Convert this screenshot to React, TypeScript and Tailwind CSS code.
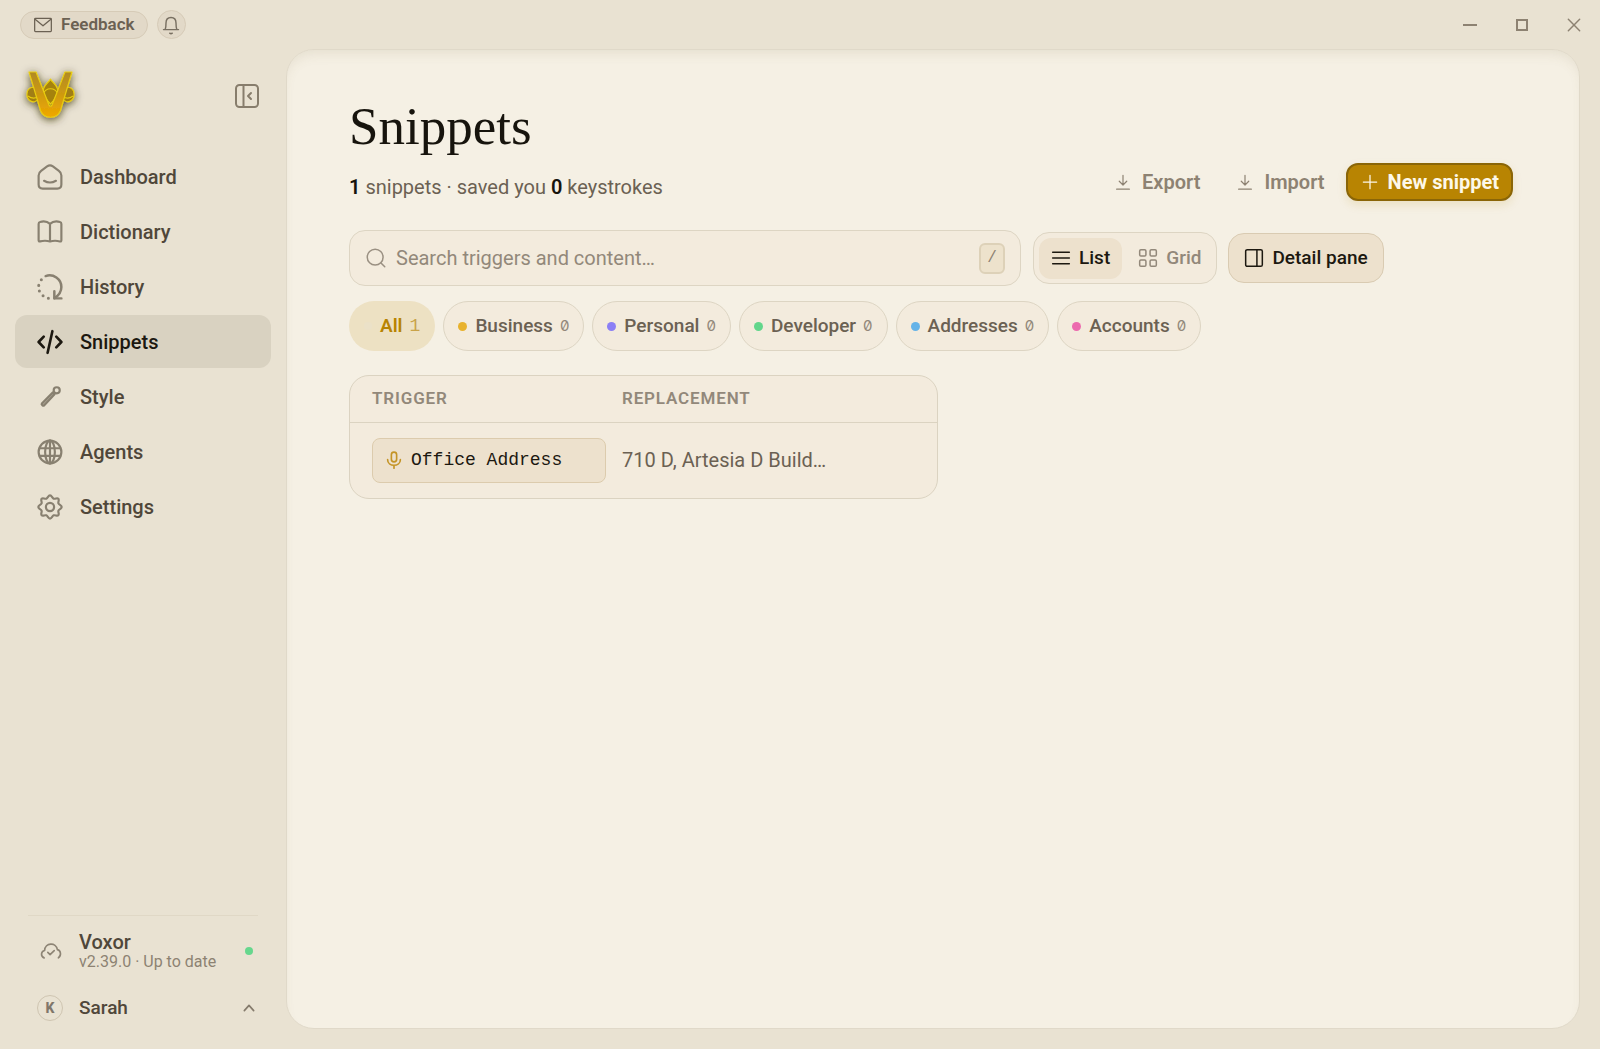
import type { ReactNode } from 'react';

type IconProps = { className?: string; children: ReactNode; width?: number };

function Icon({ className = 'size-6', children, width = 2 }: IconProps) {
  return (
    <svg
      viewBox="0 0 24 24"
      className={`shrink-0 ${className}`}
      fill="none"
      stroke="currentColor"
      strokeWidth={width}
      strokeLinecap="round"
      strokeLinejoin="round"
      aria-hidden="true"
    >
      {children}
    </svg>
  );
}

const nav = [
  {
    label: 'Dashboard',
    icon: (
      <>
        <path d="M1.500 10.500c0-2.200.6-3 2.300-4.200l5.500-4c1.800-1.300 3.600-1.300 5.400 0l5.500 4c1.700 1.200 2.300 2 2.300 4.200v8.500c0 2.500-1.200 3.700-3.700 3.700H5.200c-2.500 0-3.700-1.200-3.700-3.700z" />
        <path d="M6.500 15.500c3.500 2 7.500 2 11 0" />
      </>
    ),
  },
  {
    label: 'Dictionary',
    icon: (
      <path d="M12 4.500v16.300M12 4.500C9.500 2.300 5.500 2 2.800 2.800c-.8.200-1.300.8-1.300 1.700v15.200c0 .8.500 1.200 1.300 1 3-.8 6.700-.7 9.200.1 2.500-.8 6.200-.9 9.200-.1.800.2 1.300-.2 1.300-1V4.500c0-.9-.5-1.500-1.300-1.700C18.500 2 14.500 2.300 12 4.500z" />
    ),
  },
  {
    label: 'History',
    icon: (
      <>
        <path d="M8 1.900C15-.6 22.500 4.700 22.500 12c0 4.300-2.400 7.700-6.300 10.300" strokeWidth={2.300} />
        <path d="M16 16v6.500h6.500" strokeWidth={2.300} />
        <path d="M4 5.300v.01M1.600 10.500v.01M2.200 15.700v.01M5.600 20v.01M10.500 22.400v.01" strokeWidth={2.800} />
      </>
    ),
  },
  {
    label: 'Snippets',
    active: true,
    icon: <path d="m6.200 7-4.700 5 4.700 5M17.800 7l4.700 5-4.700 5M14.200 2 9.800 22" strokeWidth={2.400} />,
  },
  {
    label: 'Style',
    icon: (
      <>
        <path d="m14.500 7.800 1.700 1.700L6.500 19.800c-.8.800-2.800-.8-2-1.900z" fill="currentColor" fillOpacity="0.600" />
        <circle cx="18.200" cy="5.800" r="2.800" />
      </>
    ),
  },
  {
    label: 'Agents',
    icon: (
      <>
        <circle cx="12" cy="12" r="10.500" />
        <ellipse cx="12" cy="12" rx="4.500" ry="10.500" />
        <path d="M2.500 8.500h19M2.500 15.500h19M12 1.500v21" />
      </>
    ),
  },
  {
    label: 'Settings',
    icon: (
      <>
        <path d="M12 1.300c1.700 0 2 2.400 3.400 3 1.400.6 3.200-1 4.300.1s-.5 2.900.1 4.300c.6 1.400 3 1.600 3 3.300s-2.400 1.900-3 3.300c-.6 1.400 1 3.200-.1 4.300s-2.900-.5-4.300.1c-1.400.6-1.700 3-3.400 3s-2-2.400-3.400-3c-1.400-.6-3.200 1-4.300-.1s.5-2.900-.1-4.300c-.6-1.400-3-1.600-3-3.300s2.400-1.900 3-3.300c.6-1.400-1-3.200.1-4.300s2.900.5 4.300-.1c1.400-.6 1.700-3 3.400-3z" />
        <circle cx="12" cy="12" r="3.800" />
      </>
    ),
  },
];

const categories = [
  { label: 'Business', dot: 'bg-[#e8b22d]' },
  { label: 'Personal', dot: 'bg-[#8b7ff5]' },
  { label: 'Developer', dot: 'bg-[#62d68b]' },
  { label: 'Addresses', dot: 'bg-[#65b3e8]' },
  { label: 'Accounts', dot: 'bg-[#ec6aae]' },
];

function Logo() {
  return (
    <svg viewBox="0 0 64 64" className="size-16 overflow-visible" role="img" aria-label="Voxor">
      <defs>
        <linearGradient id="gold" x1="0" y1="0" x2="0" y2="1">
          <stop offset="0" stopColor="#b08a25" />
          <stop offset="0.5" stopColor="#cf9a10" />
          <stop offset="1" stopColor="#f0a800" />
        </linearGradient>
        <filter id="glow" x="-40%" y="-40%" width="180%" height="180%">
          <feDropShadow dx="0" dy="2" stdDeviation="4" floodColor="#3a3010" floodOpacity="0.85" />
        </filter>
      </defs>
      <g filter="url(#glow)" stroke="#e8cc12" strokeWidth="1.200" strokeLinejoin="round">
        <path d="M31.500 15c1 3 6 5 7 10 1 6-3 11-7 15-4-4-8-9-7-15 1-5 6-7 7-10z" fill="#a5820f" />
        <path d="M22 27c-3-5-11-5-13.500 0-2 7 2.500 12 7.500 10.500 4-1.500 6-5.500 6-10.500z" fill="#a07e12" />
        <path d="M41 27c3-5 11-5 13.500 0 2 7-2.500 12-7.500 10.500-4-1.500-6-5.500-6-10.500z" fill="#a07e12" />
        <path d="M9 32c4 3 8 3 13-1M54 32c-4 3-8 3-13-1M24 30c3-7 12-7 15 0" fill="none" />
        <path d="M10 8h7l13 33c.5 1.500 2.500 1.500 3 0L46 8h7L41.500 46.500c-3.500 9-16.500 9-20 0z" fill="url(#gold)" />
      </g>
    </svg>
  );
}

function TitleBar() {
  return (
    <header className="flex h-[49px] shrink-0 items-center justify-between pr-[18px] pl-5">
      <div className="flex items-center gap-[9px]">
        <button className="flex h-7 items-center gap-2 rounded-full border border-[#d6cbb7] bg-[#e2d9c8] px-3 text-[17px] font-semibold text-[#6b6153]">
          <Icon className="size-5" width={1.500}>
            <rect x="2" y="4" width="20" height="16" rx="1" />
            <path d="m2.500 5 9.500 8 9.500-8" />
          </Icon>
          Feedback
        </button>
        <button
          aria-label="Notifications"
          className="flex size-[29px] items-center justify-center rounded-full border border-[#d6cbb7] bg-[#e2d9c8] text-[#786f61]"
        >
          <Icon className="size-5" width={1.700}>
            <path d="M3 17.500h18M5 17.500c1-3 1-5 1-8C6 5.500 8.500 3 12 3s6 2.500 6 6.500c0 3 0 5 1 8" />
            <path d="M10.500 21.800c1 .8 2 .8 3 0" />
          </Icon>
        </button>
      </div>
      <div className="flex items-center gap-9 text-[#8d8272]">
        <button aria-label="Minimize" className="flex size-4 items-center justify-center">
          <span className="h-0.5 w-3.5 bg-current" />
        </button>
        <button aria-label="Maximize" className="flex size-4 items-center justify-center">
          <span className="size-3 border-2 border-current" />
        </button>
        <button aria-label="Close" className="flex size-4 items-center justify-center">
          <Icon className="size-4" width={2.200}>
            <path d="m3.500 3.500 17 17m0-17-17 17" />
          </Icon>
        </button>
      </div>
    </header>
  );
}

function Sidebar() {
  return (
    <aside className="flex w-[286px] shrink-0 flex-col px-[15px]">
      <div className="flex items-center justify-between pt-[15px] pr-3 pl-1">
        <Logo />
        <button aria-label="Collapse sidebar" className="text-[#877d6c]">
          <Icon className="size-6" width={2}>
            <rect x="1" y="1" width="22" height="22" rx="3.500" />
            <path d="M8.500 1v22M16 9l-3 3 3 3" />
          </Icon>
        </button>
      </div>
      <nav className="mt-[22px] flex flex-col gap-0.5">
        {nav.map((item) => (
          <a
            key={item.label}
            href="#"
            aria-current={item.active ? 'page' : undefined}
            className={
              item.active
                ? 'flex h-[53px] items-center gap-[17px] rounded-xl bg-[#d9d2c1] px-[22px] text-xl font-medium text-[#1c1810]'
                : 'flex h-[53px] items-center gap-[17px] rounded-xl px-[22px] text-xl font-medium text-[#50473a]'
            }
          >
            <Icon className={item.active ? 'size-[26px]' : 'size-[26px] text-[#888070]'}>{item.icon}</Icon>
            {item.label}
          </a>
        ))}
      </nav>
      <div className="mx-[13px] mt-auto border-t border-[#e0d8c6] pt-[15px] pb-[27px]">
        <div className="flex items-center">
          <Icon className="ml-3 size-[22px] text-[#8d8475]" width={1.800}>
            <path d="M4.500 19.500C.5 18 .8 12.500 5 11.500 5.500 2.500 17.500 2 19 10.500c4 1 4.500 6.500 1 9" />
            <path d="m8.500 13.500 2.500 2.500 4.500-4.500" />
          </Icon>
          <div className="ml-[17px]">
            <div className="text-xl leading-[22px] font-medium text-[#50473a]">Voxor</div>
            <div className="text-base leading-[18px] text-[#8d8272]">v2.39.0 · Up to date</div>
          </div>
          <span className="mr-[5px] ml-auto size-2 rounded-full bg-[#66d78d]" />
        </div>
        <button className="mt-[23px] flex w-full items-center text-[19px] leading-7 font-medium text-[#50473a]">
          <span className="mr-4 ml-[9px] flex size-[26px] items-center justify-center rounded-full border border-[#cfc5b1] text-sm font-extrabold text-[#80766a]">
            K
          </span>
          Sarah
          <Icon className="mr-px ml-auto size-4 text-[#857b6c]" width={2.500}>
            <path d="m5 16 7-8 7 8" />
          </Icon>
        </button>
      </div>
    </aside>
  );
}

function DownloadIcon() {
  return (
    <Icon className="size-[18px]" width={1.600}>
      <path d="M12 3v13M7 11l5 5 5-5M3.500 21.500h17" />
    </Icon>
  );
}

function PageHeader() {
  return (
    <div className="flex items-end justify-between">
      <div>
        <h1 className="font-['Liberation_Serif',serif] text-[53px] leading-[74px] text-[#17140d]">Snippets</h1>
        <p className="mt-2.5 text-xl leading-7 text-[#6b6153]">
          <strong className="font-semibold text-[#17140d]">1</strong> snippets · saved you{' '}
          <strong className="font-semibold text-[#17140d]">0</strong> keystrokes
        </p>
      </div>
      <div className="flex items-center text-xl font-semibold text-[#8d8272]">
        <button className="flex items-center gap-2.5">
          <DownloadIcon />
          Export
        </button>
        <button className="ml-9 flex items-center gap-2.5">
          <DownloadIcon />
          Import
        </button>
        <button className="ml-[21px] flex h-[38px] items-center gap-2 rounded-xl border-2 border-[#8a6507] bg-[#b88402] px-3 font-bold text-[#fdf8ea] shadow-[0_4px_10px_rgba(184,132,2,0.15)]">
          <Icon className="size-5" width={1.500}>
            <path d="M12 4v16M4 12h16" />
          </Icon>
          New snippet
        </button>
      </div>
    </div>
  );
}

function Toolbar() {
  return (
    <div className="mt-[29px] flex items-center">
      <div className="flex h-14 w-[672px] items-center rounded-2xl border border-[#ddd5c3] bg-[#f3ebdd] pr-[15px] pl-4">
        <Icon className="size-5 text-[#9a9082]" width={1.800}>
          <circle cx="11" cy="11" r="9.500" />
          <path d="m18 18 4.500 4.500" />
        </Icon>
        <input
          type="text"
          aria-label="Search snippets"
          placeholder="Search triggers and content…"
          className="ml-2.5 h-10 min-w-0 flex-1 bg-transparent text-xl leading-8 text-[#1c1810] outline-none placeholder:text-[#92887a]"
        />
        <kbd className="flex h-[31px] w-[26px] items-center justify-center rounded-md border-2 border-[#ddd1b8] bg-[#ede2cc] font-['Liberation_Mono',monospace] text-base text-[#8d8272]">
          /
        </kbd>
      </div>
      <div className="ml-3 flex h-[52px] items-center rounded-2xl border border-[#ddd5c3] bg-[#f3ebdd] px-[5px] text-[19px]">
        <button
          aria-pressed="true"
          className="flex h-[41px] items-center gap-2 rounded-xl bg-[#ede1cd] px-3 font-medium text-[#1c1810]"
        >
          <Icon className="size-5" width={1.800}>
            <path d="M2 5h20M2 12h20M2 19h20" />
          </Icon>
          List
        </button>
        <button aria-pressed="false" className="flex h-[41px] items-center gap-2 pr-2.5 pl-4 font-medium text-[#92887a]">
          <Icon className="size-5" width={1.800}>
            <rect x="2" y="2" width="7.500" height="7.500" rx="1.500" />
            <rect x="14.500" y="2" width="7.500" height="7.500" rx="1.500" />
            <rect x="2" y="14.500" width="7.500" height="7.500" rx="1.500" />
            <rect x="14.500" y="14.500" width="7.500" height="7.500" rx="1.500" />
          </Icon>
          Grid
        </button>
      </div>
      <button className="ml-[11px] flex h-[50px] items-center gap-2 rounded-2xl border border-[#d9cbb2] bg-[#ede1cd] px-[15px] text-[19px] font-medium text-[#1c1810]">
        <Icon className="size-5" width={1.800}>
          <rect x="2" y="2" width="20" height="20" rx="2" />
          <path d="M15.500 2v20" />
        </Icon>
        Detail pane
      </button>
    </div>
  );
}

function Filters() {
  return (
    <div className="mt-[15px] flex flex-wrap gap-2">
      <button className="flex h-[50px] items-center rounded-full bg-[#ede1c3] px-[15px] text-[19px] font-semibold text-[#b88402]">
        <span className="mr-2 size-2 rounded-full bg-[#ebe1c8]" />
        All
        <span className="ml-[7px] font-['Liberation_Mono',monospace] text-lg font-normal text-[#c9a349]">1</span>
      </button>
      {categories.map((c) => (
        <button
          key={c.label}
          className="flex h-[50px] items-center rounded-full border border-[#ddd5c3] bg-[#f3ebdd] px-[14px] text-[19px] font-medium text-[#6b6153]"
        >
          <span className={`mr-2 size-[9px] rounded-full ${c.dot}`} />
          {c.label}
          <span className="ml-[7px] font-['Inter',sans-serif] text-[15px] font-normal text-[#92887a] slashed-zero">0</span>
        </button>
      ))}
    </div>
  );
}

function SnippetTable() {
  return (
    <div className="mt-6 max-w-[589px] overflow-hidden rounded-[20px] border border-[#dbd3c1] bg-[#f3ebdd]">
      <table className="w-full table-fixed text-left">
        <thead>
          <tr className="h-[46px] border-b border-[#dbd3c1] text-[17px] tracking-wider text-[#92887a]">
            <th scope="col" className="w-[272px] pl-[22px] font-semibold">
              TRIGGER
            </th>
            <th scope="col" className="font-semibold">
              REPLACEMENT
            </th>
          </tr>
        </thead>
        <tbody>
          <tr>
            <td className="py-[15px] pr-4 pl-[22px]">
              <div className="flex h-[45px] items-center gap-2 rounded-lg border border-[#dccbad] bg-[#ede1cd] px-3 font-['Liberation_Mono',monospace] text-lg text-[#1c1810]">
                <Icon className="size-[18px] text-[#c49426]" width={2.200}>
                  <rect x="8.500" y="1.500" width="7" height="13" rx="3.500" />
                  <path d="M3.500 11.500c0 10 17 10 17 0M12 19v4" />
                </Icon>
                Office Address
              </div>
            </td>
            <td className="text-xl text-[#6b6153]">710 D, Artesia D Build…</td>
          </tr>
        </tbody>
      </table>
    </div>
  );
}

export default function App() {
  return (
    <div className="flex min-h-screen flex-col bg-[#e9e2d2] font-['Roboto',sans-serif]">
      <TitleBar />
      <div className="flex flex-1">
        <Sidebar />
        <main className="mr-5 mb-5 min-w-0 flex-1 rounded-[28px] border border-[#e0d9c9] bg-[#f5f0e4] pr-[66px] pl-[62px] pt-[39px] shadow-[inset_0_8px_14px_-6px_rgba(120,100,60,0.14)]">
          <PageHeader />
          <Toolbar />
          <Filters />
          <SnippetTable />
        </main>
      </div>
    </div>
  );
}
